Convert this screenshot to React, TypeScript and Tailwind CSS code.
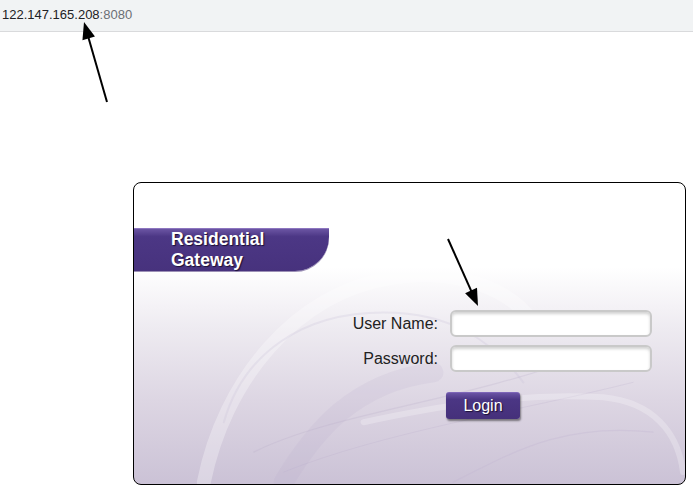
import React from "react";

function Arrow({ x1, y1, x2, y2 }: { x1: number; y1: number; x2: number; y2: number }) {
  // tip at x2,y2
  const dx = x2 - x1;
  const dy = y2 - y1;
  const len = Math.sqrt(dx * dx + dy * dy);
  const ux = dx / len;
  const uy = dy / len;
  const hl = 17;
  const hw = 6.5;
  const bx = x2 - ux * hl;
  const by = y2 - uy * hl;
  const p1 = `${bx - uy * hw},${by + ux * hw}`;
  const p2 = `${bx + uy * hw},${by - ux * hw}`;
  return (
    <g>
      <line x1={x1} y1={y1} x2={bx + ux * 2} y2={by + uy * 2} stroke="#000" strokeWidth="2" />
      <polygon points={`${x2},${y2} ${p1} ${p2}`} fill="#000" />
    </g>
  );
}

function Swirl() {
  return (
    <svg className="absolute inset-0 h-full w-full" viewBox="0 0 552 302" preserveAspectRatio="none">
      <g fill="none" strokeLinecap="round">
        <path d="M70 300 C 90 200, 160 110, 260 95 C 330 85, 380 110, 400 140" stroke="#ffffff" strokeOpacity="0.3" strokeWidth="14" />
        <path d="M90 240 C 110 170, 170 130, 250 130 C 320 130, 360 160, 390 200" stroke="#c9bfd6" strokeOpacity="0.25" strokeWidth="2" />
        <path d="M120 270 C 200 230, 330 220, 460 170" stroke="#b9abc9" strokeOpacity="0.25" strokeWidth="1.2" />
        <path d="M150 290 C 250 250, 380 230, 500 200" stroke="#b6a8c7" strokeOpacity="0.22" strokeWidth="1" />
        <path d="M230 240 C 300 225, 380 210, 470 215 C 520 220, 545 250, 550 290" stroke="#ffffff" strokeOpacity="0.25" strokeWidth="6" />
        <path d="M150 300 C 180 250, 220 200, 300 190" stroke="#b8aac8" strokeOpacity="0.15" strokeWidth="20" />
        <path d="M320 300 C 380 270, 430 240, 520 250" stroke="#c0b3cf" strokeOpacity="0.3" strokeWidth="1.2" />
      </g>
    </svg>
  );
}

export default function App() {
  return (
    <div className="relative h-[493px] w-[693px] overflow-hidden bg-white font-['Liberation_Sans',Arial,sans-serif]">
      {/* Address bar */}
      <div className="flex h-[32px] items-center border-b border-[#d9dadc] bg-[#f1f3f4] pl-[2px] pb-[1px] text-[13px]">
        <span className="text-[#202124]">122.147.165.208</span>
        <span className="text-[#6b6f74]">:8080</span>
      </div>

      {/* Login panel */}
      <div className="relative ml-[133px] mt-[150px] h-[303px] w-[553px] overflow-hidden rounded-[8px] border border-black bg-[linear-gradient(to_bottom,#ffffff_0%,#ffffff_28%,#eeebf1_48%,#ddd6e3_72%,#cbc2d6_100%)]">
        <Swirl />
        <div className="relative flex flex-col">
          <div className="mt-[45px] flex h-[43px] w-[195px] flex-col justify-center rounded-br-[34px] border-t border-[#8d76c0] bg-[linear-gradient(to_bottom,#6b55a3_0%,#4c3785_18%,#47327d_100%)] pl-[37px] text-[17.5px] font-bold leading-[21px] text-white shadow-[0_1px_0_#9c90b6] [text-shadow:1px_1px_1px_#1a0f33]">
            <span>Residential</span>
            <span>Gateway</span>
          </div>

          <div className="ml-[200px] mt-[39px] grid grid-cols-[104px_202px] items-center gap-x-[12px] gap-y-[8px] text-[16px] text-[#222]">
            <label className="text-right">User Name:</label>
            <div className="h-[27px] rounded-[6px] border-2 border-[#c9c9c9] bg-white shadow-[inset_0_2px_3px_rgba(0,0,0,0.18)]" />
            <label className="text-right">Password:</label>
            <div className="h-[27px] rounded-[6px] border-2 border-[#c9c9c9] bg-white shadow-[inset_0_2px_3px_rgba(0,0,0,0.18)]" />
            <div />
            <div className="mt-[12px] -ml-[4px]">
              <button
                type="button"
                className="flex h-[27px] w-[74px] items-center justify-center rounded-[3px] border-t border-[#7d65b8] bg-[linear-gradient(to_bottom,#6a53a4_0%,#4b3684_25%,#45307a_100%)] text-[16px] text-white shadow-[1px_2px_2px_rgba(0,0,0,0.45)] [text-shadow:1px_1px_1px_#1a0f33]"
              >
                Login
              </button>
            </div>
          </div>
        </div>
      </div>

      {/* Annotation arrows */}
      <svg className="pointer-events-none absolute left-0 top-0 h-[493px] w-[693px]" viewBox="0 0 693 493">
        <Arrow x1={107} y1={102} x2={84} y2={22} />
        <Arrow x1={448} y1={239} x2={478} y2={306} />
      </svg>
    </div>
  );
}
